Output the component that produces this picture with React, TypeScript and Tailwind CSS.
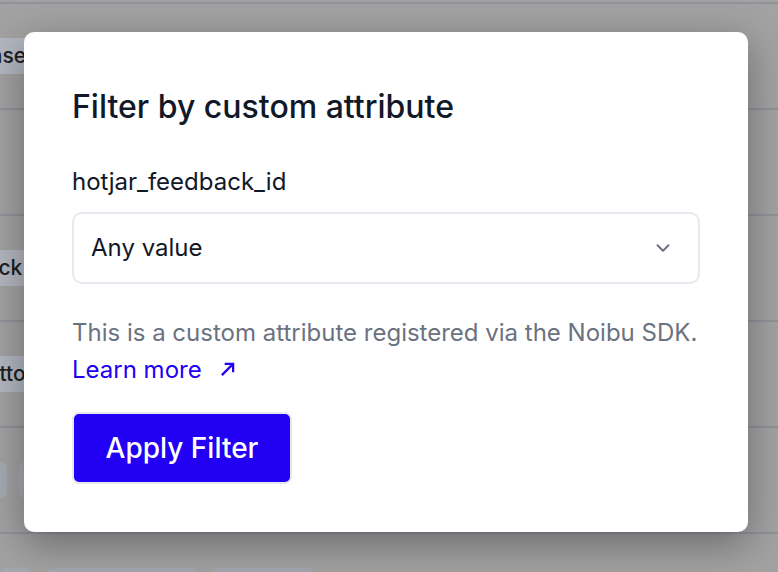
import { ChevronDown } from 'lucide-react';

const rows = [
  { offset: 'ml-[-80px]', text: 'Purchase', pills: [] as string[] },
  { offset: '', text: '', pills: [] as string[] },
  { offset: 'ml-[-88px]', text: 'Feedback', pills: [] as string[] },
  { offset: 'ml-[-39px]', text: 'Button', pills: [] as string[] },
  { offset: 'ml-[-53px]', text: '', pills: ['w-[60px]', 'w-[60px]'] },
  { offset: '', text: '', pills: ['w-[32px]', 'w-[150px]', 'w-[101px]'] },
];

export default function App() {
  return (
    <div
      className="relative h-[572px] w-[778px] overflow-hidden bg-[#a2a2a2]"
      style={{ fontFamily: 'Inter, "Noto Sans", sans-serif' }}
    >
      {/* dimmed table behind the dialog */}
      <div className="flex flex-col">
        <div className="h-[4px] border-b-2 border-[#8f939a]" />
        {rows.map((row, i) => (
          <div key={i} className="flex h-[106px] items-center border-b-2 border-[#8f939a]">
            {row.text ? (
              <div className={`${row.offset} flex h-[36px] items-center rounded-md bg-[#b3b7c0] px-3 text-[21px] font-medium text-[#1c1f24]`}>
                {row.text}
              </div>
            ) : row.pills.length === 2 ? (
              <div className={`${row.offset} flex gap-[12px]`}>
                {row.pills.map((w, j) => (
                  <div key={j} className={`h-[36px] rounded-md bg-[#a6aab3] ${w}`} />
                ))}
              </div>
            ) : row.pills.length === 3 ? (
              <div className="flex gap-[15px] self-start pt-[34px]">
                {row.pills.map((w, j) => (
                  <div key={j} className={`h-[36px] rounded-md bg-[#a3a7b0] ${w}`} />
                ))}
              </div>
            ) : null}
          </div>
        ))}
      </div>

      {/* dialog */}
      <div className="absolute left-[24px] top-[32px] flex h-[500px] w-[724px] flex-col rounded-[10px] bg-white px-[48px] pt-[57px] shadow-[0_12px_40px_rgba(0,0,0,0.35)]">
        <h2 className="text-[32px] leading-[36px] font-medium text-[#111827]">Filter by custom attribute</h2>

        <div className="mt-[43px] text-[24px] leading-[28px] text-[#111827]">hotjar_feedback_id</div>

        <button className="mt-[16px] flex h-[72px] w-[628px] items-center justify-between rounded-[10px] border-2 border-[#e5e9f0] bg-white pl-[17px] pr-[24px] text-left text-[24px] text-[#111827]">
          <span>Any value</span>
          <ChevronDown size={22} strokeWidth={2.2} className="text-[#6b7280]" />
        </button>

        <p className="mt-[30px] text-[24px] leading-[37px] text-[#6b7280]">
          This is a custom attribute registered via the Noibu SDK.
          <br />
          <a className="inline-flex items-center gap-[18px] text-[#2100f3]">
            Learn more
            <svg width="15" height="15" viewBox="0 0 16 16" fill="none" stroke="currentColor" strokeWidth="2.4">
              <path d="M2 14 L14 2" />
              <path d="M5 2 H14 V11" />
            </svg>
          </a>
        </p>

        <button className="mt-[24px] flex h-[72px] w-[220px] items-center justify-center rounded-[7px] border-2 border-[#e5e9f0] bg-[#2100f3] text-[28px] font-medium text-white">
          Apply Filter
        </button>
      </div>
    </div>
  );
}
